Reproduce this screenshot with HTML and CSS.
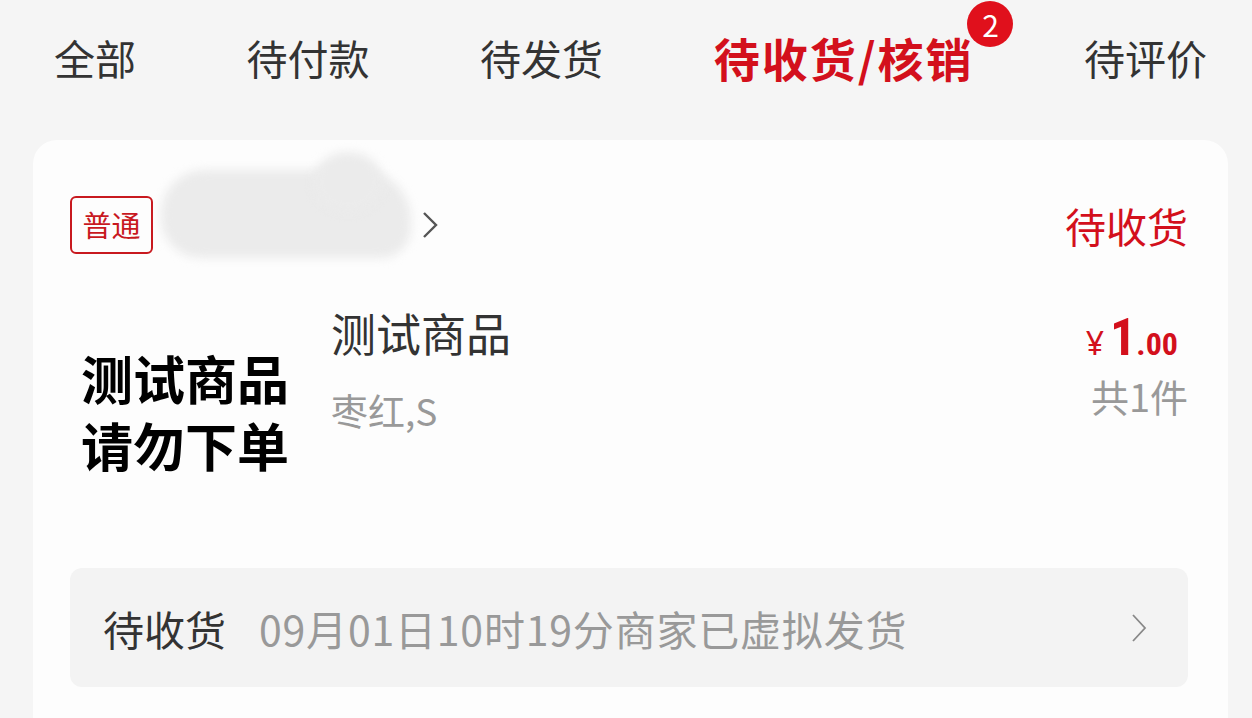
FILE: index.html
```html
<!DOCTYPE html>
<html lang="zh-CN">
<head>
    <meta charset="UTF-8">
    <meta name="viewport" content="width=device-width, initial-scale=1.0">
    <title>我的订单</title>
    <link rel="stylesheet" href="styles.css">
</head>
<body>
    <div class="tabs">
        <div class="tab">全部</div>
        <div class="tab">待付款</div>
        <div class="tab">待发货</div>
        <div class="tab active">待收货/核销<span class="badge">2</span></div>
        <div class="tab">待评价</div>
    </div>

    <div class="order-card">
        <div class="order-head">
            <span class="tag">普通</span>
            <span class="shop-name"><span class="shop-blur"></span><span class="shop-blur bump"></span></span>
            <svg class="arrow" width="18" height="30" viewBox="0 0 18 30">
                <polyline points="3,3 15,15 3,27" fill="none" stroke="#555" stroke-width="2.4"/>
            </svg>
            <span class="status">待收货</span>
        </div>

        <div class="goods">
            <div class="goods-pic">
                <div>测试商品</div>
                <div>请勿下单</div>
            </div>
            <div class="goods-info">
                <div class="goods-title">测试商品</div>
                <div class="goods-spec">枣红,S</div>
            </div>
            <div class="goods-price">
                <div class="price"><span class="yen">¥</span><span class="int">1</span><span class="dec">.00</span></div>
                <div class="count">共1件</div>
            </div>
        </div>

        <div class="logistics">
            <span class="log-status">待收货</span>
            <span class="log-text">09月01日10时19分商家已虚拟发货</span>
            <svg class="log-arrow" width="18" height="30" viewBox="0 0 18 30">
                <polyline points="3,2 15,15 3,28" fill="none" stroke="#888" stroke-width="1.8"/>
            </svg>
        </div>
    </div>
</body>
</html>
```

FILE: styles.css
```css
body {
    margin: 0;
    background-color: #f5f5f5;
    font-family: "Noto Sans CJK SC", "Noto Sans", sans-serif;
    color: #333;
    overflow: hidden;
}
.tabs {
    display: flex;
    justify-content: space-between;
    align-items: center;
    padding: 29px 45px 0 54px;
    height: 56px;
}
.tab {
    font-size: 41px;
    line-height: 56px;
    color: #333;
    position: relative;
}
.tab.active {
    font-size: 46px;
    letter-spacing: 2px;
    font-weight: bold;
    color: #d3101c;
}
.badge {
    position: absolute;
    top: -28px;
    right: -40px;
    width: 46px;
    height: 46px;
    border-radius: 50%;
    background-color: #e0101c;
    color: white;
    font-size: 30px;
    font-weight: normal;
    letter-spacing: 0;
    line-height: 46px;
    text-align: center;
}
.order-card {
    margin: 55px 24px 0 33px;
    background-color: #fdfdfd;
    border-radius: 24px;
    padding: 56px 40px 40px 37px;
    height: 600px;
}
.order-head {
    display: flex;
    align-items: center;
    height: 57px;
}
.tag {
    box-sizing: border-box;
    width: 83px;
    height: 58px;
    border: 2px solid #c8191f;
    border-radius: 6px;
    color: #c8191f;
    font-size: 29px;
    line-height: 52px;
    text-align: center;
}
.shop-name {
    width: 262px;
    height: 57px;
    position: relative;
}
.shop-blur {
    position: absolute;
    left: 8px;
    top: -26px;
    width: 250px;
    height: 88px;
    border-radius: 44px 50px 30px 40px;
    background-color: #ebebeb;
    filter: blur(5px);
}
.shop-blur.bump {
    left: 160px;
    top: -44px;
    width: 70px;
    height: 60px;
    border-radius: 50%;
}
.arrow {
    margin-left: 6px;
}
.status {
    margin-left: auto;
    font-size: 41px;
    color: #d3101c;
}
.goods {
    display: flex;
    margin-top: 42px;
}
.goods-pic {
    width: 230px;
    height: 232px;
    display: flex;
    flex-direction: column;
    justify-content: center;
    text-align: center;
    font-size: 52px;
    line-height: 67px;
    font-weight: bold;
    color: #000;
}
.goods-info {
    margin-left: 31px;
    flex: 1;
}
.goods-title {
    font-size: 45px;
    line-height: 60px;
    color: #333;
    margin-top: 8px;
}
.goods-spec {
    font-size: 37px;
    line-height: 50px;
    color: #999;
    margin-top: 22px;
}
.goods-price {
    text-align: right;
    margin-top: 16px;
}
.price {
    color: #d3101c;
    font-family: "Liberation Sans Narrow", "Roboto Condensed", "Roboto", sans-serif;
    line-height: 54px;
    padding-right: 10px;
}
.yen {
    font-family: "Noto Sans", sans-serif;
    font-size: 32px;
    margin-right: 6px;
}
.int {
    font-size: 52px;
    font-weight: bold;
}
.dec {
    font-size: 32px;
    font-weight: bold;
}
.count {
    font-size: 38px;
    line-height: 50px;
    color: #999;
    margin-top: -6px;
}
.logistics {
    display: flex;
    align-items: center;
    margin-top: 41px;
    height: 119px;
    padding: 0 40px 0 33px;
    background-color: #f3f3f3;
    border-radius: 12px;
}
.log-status {
    font-size: 41px;
    color: #333;
}
.log-text {
    margin-left: 33px;
    font-size: 41px;
    letter-spacing: 0.8px;
    color: #999;
}
.log-arrow {
    margin-left: auto;
}
```
